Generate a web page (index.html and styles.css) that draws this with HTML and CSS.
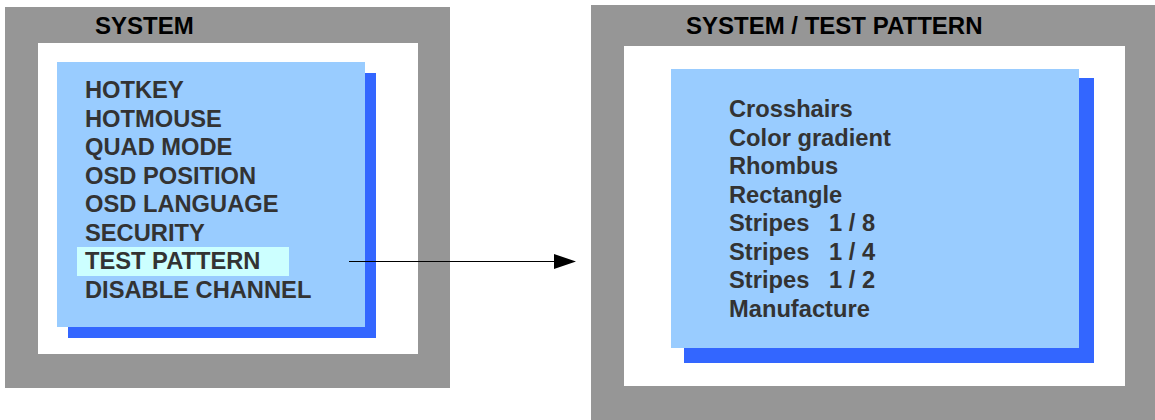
FILE: index.html
```html
<!DOCTYPE html>
<html lang="en">
<head>
<meta charset="utf-8">
<title>OSD System Menu</title>
<link rel="stylesheet" href="styles.css">
</head>
<body>
<div class="stage">
  <section class="panel panel-left">
    <h2 class="panel-title">SYSTEM</h2>
    <div class="frame frame-left">
      <ul class="menu menu-left">
        <li>HOTKEY</li>
        <li>HOTMOUSE</li>
        <li>QUAD MODE</li>
        <li>OSD POSITION</li>
        <li>OSD LANGUAGE</li>
        <li>SECURITY</li>
        <li class="selected">TEST PATTERN</li>
        <li>DISABLE CHANNEL</li>
      </ul>
    </div>
  </section>
  <section class="panel panel-right">
    <h2 class="panel-title">SYSTEM / TEST PATTERN</h2>
    <div class="frame frame-right">
      <ul class="menu menu-right">
        <li>Crosshairs</li>
        <li>Color gradient</li>
        <li>Rhombus</li>
        <li>Rectangle</li>
        <li>Stripes&nbsp;&nbsp;&nbsp;1 / 8</li>
        <li>Stripes&nbsp;&nbsp;&nbsp;1 / 4</li>
        <li>Stripes&nbsp;&nbsp;&nbsp;1 / 2</li>
        <li>Manufacture</li>
      </ul>
    </div>
  </section>
  <svg class="arrow" width="227" height="15" viewBox="0 0 227 15" aria-hidden="true">
    <line x1="0" y1="7.5" x2="206" y2="7.5" stroke="#000" stroke-width="1"/>
    <polygon points="205,0 205,15 227,7.5" fill="#000"/>
  </svg>
</div>
</body>
</html>
```
FILE: styles.css
```css
html, body {
  margin: 0;
  padding: 0;
  background: #ffffff;
  overflow: hidden;
}

body {
  width: 1155px;
  height: 420px;
  font-family: "Liberation Sans", Arial, sans-serif;
  font-weight: bold;
}

.stage {
  position: relative;
  display: flex;
  align-items: flex-start;
  gap: 141px;
  width: 1155px;
  height: 420px;
  padding-left: 5px;
  box-sizing: border-box;
}

.panel {
  background: #969696;
  box-sizing: border-box;
}

.panel-title {
  margin: 0;
  font-size: 24px;
  font-weight: bold;
  color: #000000;
  white-space: nowrap;
}

.panel-left {
  margin-top: 7px;
  width: 445px;
  height: 381px;
  padding: 0 0 0 33px;
}

.panel-left .panel-title {
  line-height: 36px;
  height: 36px;
  padding: 1px 0 0 57px;
  box-sizing: border-box;
}

.panel-right {
  margin-top: 5px;
  flex: 1;
  height: 415px;
  padding: 0 0 0 33px;
}

.panel-right .panel-title {
  line-height: 40px;
  height: 41px;
  padding: 1px 0 0 62px;
  box-sizing: border-box;
}

.frame {
  background: #ffffff;
  box-sizing: border-box;
}

.frame-left {
  width: 380px;
  height: 311px;
  padding: 19px 0 0 19px;
}

.frame-right {
  width: 501px;
  height: 340px;
  padding: 23px 0 0 47px;
}

.menu {
  list-style: none;
  margin: 0;
  background: #99ccff;
  color: #333333;
  font-size: 23.7px;
  line-height: 28.5px;
  box-sizing: border-box;
}

.menu li {
  white-space: nowrap;
  height: 28.5px;
}

.menu-left {
  width: 308px;
  height: 265px;
  padding: 14px 0 0 28px;
  box-shadow: 11px 11px 0 0 #3366ff;
}

.menu-left .selected {
  background: #ccffff;
  width: 204px;
  height: 29px;
  margin-left: -8px;
  padding-left: 8px;
}

.menu-right {
  width: 408px;
  height: 279px;
  padding: 26px 0 0 58px;
  box-shadow: 14px 10px 0 1px #3366ff, 14px 14px 0 1px #3366ff;
}

.arrow {
  position: absolute;
  left: 349px;
  top: 254px;
  display: block;
}
```
